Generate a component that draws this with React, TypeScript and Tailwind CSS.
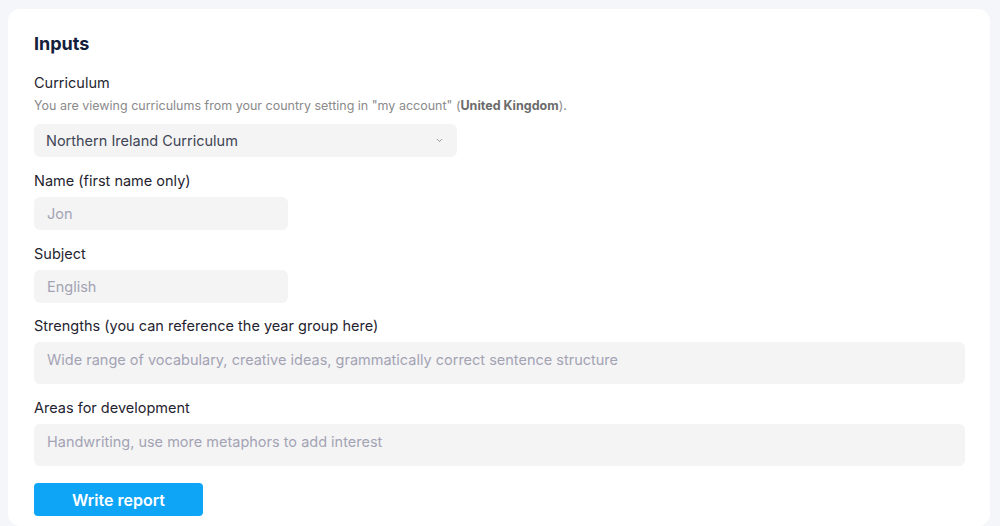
import { ChevronDown } from 'lucide-react';

const field =
  'rounded-md bg-[#f4f4f5] px-[13px] text-[14.5px] text-[#4b5563] placeholder:text-[#a3a3b3] focus:outline-none';

function Label({ children }: { children: React.ReactNode }) {
  return <label className="block text-[14.5px] leading-[20px] text-[#1f2430]">{children}</label>;
}

export default function App() {
  return (
    <div className="min-h-screen bg-[#f4f6f9] pl-[8px] pr-[10px] pt-[9px] font-['Inter',sans-serif]">
      <div className="rounded-xl bg-white pl-[26px] pr-[25px] pt-[24px] pb-[10px]">
        <h2 className="text-[18px] font-bold leading-[22px] text-[#14203b]">Inputs</h2>

        {/* Curriculum */}
        <div className="mt-[18px]">
          <Label>Curriculum</Label>
          <p className="mt-[5px] text-[12.5px] leading-[16px] text-[#8a8a8a]">
            You are viewing curriculums from your country setting in "my account" (
            <span className="font-bold text-[#6b6b6b]">United Kingdom</span>).
          </p>
          <div className="relative mt-[10px] w-[423px]">
            <select
              defaultValue="ni"
              className="h-[33px] w-full appearance-none rounded-md bg-[#f4f4f5] px-[12px] text-[14.5px] text-[#3f4554] focus:outline-none"
            >
              <option value="ni">Northern Ireland Curriculum</option>
            </select>
            <ChevronDown
              className="pointer-events-none absolute right-[13px] top-[12px] h-[9px] w-[9px] text-[#777]"
              strokeWidth={2}
            />
          </div>
        </div>

        {/* Name */}
        <div className="mt-[14px]">
          <Label>Name (first name only)</Label>
          <input placeholder="Jon" className={`${field} mt-[6px] h-[33px] w-[254px]`} />
        </div>

        {/* Subject */}
        <div className="mt-[14px]">
          <Label>Subject</Label>
          <input placeholder="English" className={`${field} mt-[6px] h-[33px] w-[254px]`} />
        </div>

        {/* Strengths */}
        <div className="mt-[13px]">
          <Label>Strengths (you can reference the year group here)</Label>
          <textarea
            rows={1}
            placeholder="Wide range of vocabulary, creative ideas, grammatically correct sentence structure"
            className={`${field} mt-[6px] block h-[42px] w-full resize-none pt-[7px]`}
          />
        </div>

        {/* Areas for development */}
        <div className="mt-[14px]">
          <Label>Areas for development</Label>
          <textarea
            rows={1}
            placeholder="Handwriting, use more metaphors to add interest"
            className={`${field} mt-[6px] block h-[42px] w-full resize-none pt-[7px]`}
          />
        </div>

        <button className="mt-[17px] h-[33px] w-[169px] rounded-[4px] bg-[#0ea5f7] text-[16px] font-semibold text-white">
          Write report
        </button>
      </div>
    </div>
  );
}
